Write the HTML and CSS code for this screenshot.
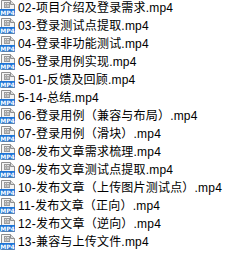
FILE: index.html
```html
<!DOCTYPE html>
<html lang="zh-CN">
<head>
<meta charset="utf-8">
<link rel="stylesheet" href="styles.css">
</head>
<body>
<ul class="files">
  <li class="file"><svg class="ico" viewBox="0 0 16 16"><use href="#mp4"/></svg><span class="name">02-项目介绍及登录需求.mp4</span></li>
  <li class="file"><svg class="ico" viewBox="0 0 16 16"><use href="#mp4"/></svg><span class="name">03-登录测试点提取.mp4</span></li>
  <li class="file"><svg class="ico" viewBox="0 0 16 16"><use href="#mp4"/></svg><span class="name">04-登录非功能测试.mp4</span></li>
  <li class="file"><svg class="ico" viewBox="0 0 16 16"><use href="#mp4"/></svg><span class="name">05-登录用例实现.mp4</span></li>
  <li class="file"><svg class="ico" viewBox="0 0 16 16"><use href="#mp4"/></svg><span class="name">5-01-反馈及回顾.mp4</span></li>
  <li class="file"><svg class="ico" viewBox="0 0 16 16"><use href="#mp4"/></svg><span class="name">5-14-总结.mp4</span></li>
  <li class="file"><svg class="ico" viewBox="0 0 16 16"><use href="#mp4"/></svg><span class="name">06-登录用例（兼容与布局）.mp4</span></li>
  <li class="file"><svg class="ico" viewBox="0 0 16 16"><use href="#mp4"/></svg><span class="name">07-登录用例（滑块）.mp4</span></li>
  <li class="file"><svg class="ico" viewBox="0 0 16 16"><use href="#mp4"/></svg><span class="name">08-发布文章需求梳理.mp4</span></li>
  <li class="file"><svg class="ico" viewBox="0 0 16 16"><use href="#mp4"/></svg><span class="name">09-发布文章测试点提取.mp4</span></li>
  <li class="file"><svg class="ico" viewBox="0 0 16 16"><use href="#mp4"/></svg><span class="name">10-发布文章（上传图片测试点）.mp4</span></li>
  <li class="file"><svg class="ico" viewBox="0 0 16 16"><use href="#mp4"/></svg><span class="name">11-发布文章（正向）.mp4</span></li>
  <li class="file"><svg class="ico" viewBox="0 0 16 16"><use href="#mp4"/></svg><span class="name">12-发布文章（逆向）.mp4</span></li>
  <li class="file"><svg class="ico" viewBox="0 0 16 16"><use href="#mp4"/></svg><span class="name">13-兼容与上传文件.mp4</span></li>
</ul>
<svg class="defs" width="0" height="0">
  <defs>
    <g id="mp4">
      <path d="M1.5 0.5 H10.5 L14.5 4.5 V15.5 H1.5 Z" fill="#f4f4f4" stroke="#8e8e8e"/>
      <path d="M10.5 0.5 V4.5 H14.5" fill="#dcdcdc" stroke="#8e8e8e"/>
      <rect x="4.5" y="2.5" width="5" height="5" fill="#e6e6e6" stroke="#9a9a9a"/>
      <path d="M4.5 4.5 H9.5 M4.5 6 H9.5 M6.5 2.5 V7.5" stroke="#a8a8a8" fill="none"/>
      <rect x="0" y="9" width="15" height="6.5" fill="#1e74d6"/>
      <text x="7.5" y="14.6" text-anchor="middle" class="lbl">MP4</text>
    </g>
  </defs>
</svg>
</body>
</html>
```

FILE: styles.css
```css
html, body {
  margin: 0;
  padding: 0;
  background: #ffffff;
}
body {
  font-family: "Liberation Sans", "Noto Sans CJK SC", sans-serif;
  font-size: 12px;
  color: #000000;
  overflow: hidden;
}
.files {
  list-style: none;
  margin: -1px 0 0 0;
  padding: 0;
  display: flex;
  flex-direction: column;
}
.file {
  height: 18px;
  display: flex;
  align-items: center;
  gap: 2px;
  white-space: nowrap;
}
.ico {
  width: 16px;
  height: 16px;
  flex: none;
}
.name {
  line-height: 18px;
  letter-spacing: 0.2px;
}
.lbl {
  font-family: "DejaVu Sans", sans-serif;
  font-size: 6px;
  font-weight: bold;
  fill: #ffffff;
}
.defs {
  position: absolute;
  width: 0;
  height: 0;
}
```
